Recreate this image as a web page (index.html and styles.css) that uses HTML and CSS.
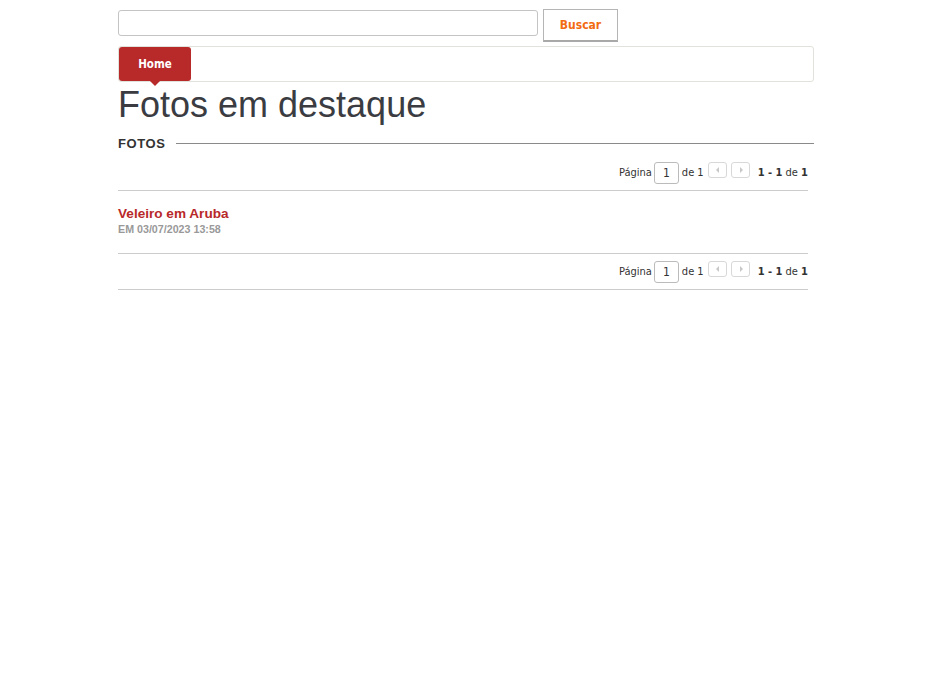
FILE: index.html
```html
<!DOCTYPE html>
<html lang="pt-BR">
<head>
  <meta charset="UTF-8">
  <title>Fotos em destaque</title>
  <link rel="stylesheet" href="styles.css">
</head>
<body>
<div class="page">
  <form class="search">
    <input type="text" class="search-input">
    <button type="button" class="search-btn">Buscar</button>
  </form>

  <div class="breadcrumb">
    <a class="crumb" href="#">Home</a>
  </div>

  <h1 class="title">Fotos em destaque</h1>

  <div class="section-head">
    <span>FOTOS</span>
    <div class="section-line"></div>
  </div>

  <div class="pager first">
    <span>Página</span>
    <input type="text" class="pager-input" value="1">
    <span>de 1</span>
    <span class="pager-btn prev"></span>
    <span class="pager-btn next"></span>
    <span class="pager-count"><b>1 - 1</b> de <b>1</b></span>
  </div>

  <div class="item">
    <a class="item-title" href="#">Veleiro em Aruba</a>
    <div class="item-date">EM 03/07/2023 13:58</div>
  </div>

  <div class="pager">
    <span>Página</span>
    <input type="text" class="pager-input" value="1">
    <span>de 1</span>
    <span class="pager-btn prev"></span>
    <span class="pager-btn next"></span>
    <span class="pager-count"><b>1 - 1</b> de <b>1</b></span>
  </div>
</div>
</body>
</html>
```

FILE: styles.css
```css
body {
  margin: 0;
  padding: 0;
  background: #fff;
  font-family: 'Liberation Sans', Arial, sans-serif;
  color: #333;
}
.page {
  width: 696px;
  margin-left: 118px;
  padding-top: 9px;
}
.search {
  display: flex;
  align-items: flex-start;
  gap: 5px;
  margin: 0;
}
.search-input {
  width: 420px;
  height: 26px;
  margin-top: 1px;
  box-sizing: border-box;
  border: 1px solid #c4c4c4;
  border-radius: 3px;
  padding: 2px 6px;
}
.search-btn {
  width: 75px;
  height: 33px;
  box-sizing: border-box;
  background: #fff;
  border: 1px solid #b5b5b5;
  border-bottom: 2px solid #a8a8a8;
  color: #f26b12;
  font-family: 'DejaVu Sans Condensed', 'DejaVu Sans', sans-serif;
  font-size: 12px;
  font-weight: bold;
  padding: 0;
  cursor: pointer;
}
.breadcrumb {
  margin-top: 4px;
  height: 36px;
  box-sizing: border-box;
  border: 1px solid #e2e2dc;
  border-radius: 3px;
  display: flex;
}
.crumb {
  position: relative;
  width: 72px;
  height: 34px;
  box-sizing: border-box;
  background: #b8292a;
  border-radius: 3px;
  color: #fff;
  text-decoration: none;
  font-family: 'DejaVu Sans Condensed', 'DejaVu Sans', sans-serif;
  font-size: 11.5px;
  font-weight: bold;
  display: flex;
  align-items: center;
  justify-content: center;
}
.crumb::after {
  content: "";
  position: absolute;
  left: 31px;
  bottom: -5px;
  border-left: 5px solid transparent;
  border-right: 5px solid transparent;
  border-top: 5px solid #b8292a;
}
.title {
  margin: 3px 0 0 0;
  font-size: 36px;
  font-weight: normal;
  line-height: 40px;
  color: #3a3c42;
}
.section-head {
  display: flex;
  align-items: center;
  gap: 10px;
  margin-top: 11px;
  font-size: 13px;
  font-weight: bold;
  line-height: 15px;
  color: #333;
  letter-spacing: 0.6px;
}
.section-line {
  flex: 1;
  height: 1px;
  background: #8a8a8a;
}
.pager {
  width: 690px;
  display: flex;
  justify-content: flex-end;
  align-items: flex-start;
  padding: 7px 0 6px;
  border-bottom: 1px solid #ccc;
  font-family: 'DejaVu Sans Condensed', 'DejaVu Sans', sans-serif;
  font-size: 11px;
  color: #333;
  line-height: 22px;
}
.pager.first {
  margin-top: 4px;
}
.pager-input {
  width: 25px;
  height: 22px;
  box-sizing: border-box;
  border: 1px solid #bbb;
  border-radius: 3px;
  text-align: center;
  font-family: 'DejaVu Sans Condensed', 'DejaVu Sans', sans-serif;
  font-size: 12px;
  color: #333;
  padding: 0;
  margin: 0 3px 0 2px;
}
.pager-btn {
  position: relative;
  width: 19px;
  height: 16px;
  box-sizing: border-box;
  border: 1px solid #d8d8d8;
  border-radius: 3px;
  margin-left: 4px;
}
.pager-btn::after {
  content: "";
  position: absolute;
  top: 4px;
  border-top: 3px solid transparent;
  border-bottom: 3px solid transparent;
}
.pager-btn.prev::after {
  left: 7px;
  border-right: 3px solid #c8c8c8;
}
.pager-btn.next::after {
  left: 8px;
  border-left: 3px solid #c8c8c8;
}
.pager-count {
  margin-left: 8px;
}
.item {
  padding: 15px 0 17px;
  border-bottom: 1px solid #ccc;
  width: 690px;
}
.item-title {
  display: block;
  color: #b8292a;
  font-size: 13.6px;
  font-weight: bold;
  text-decoration: none;
  line-height: 16px;
}
.item-date {
  color: #999;
  font-size: 10.7px;
  font-weight: bold;
  line-height: 13px;
  margin-top: 1px;
}
```
